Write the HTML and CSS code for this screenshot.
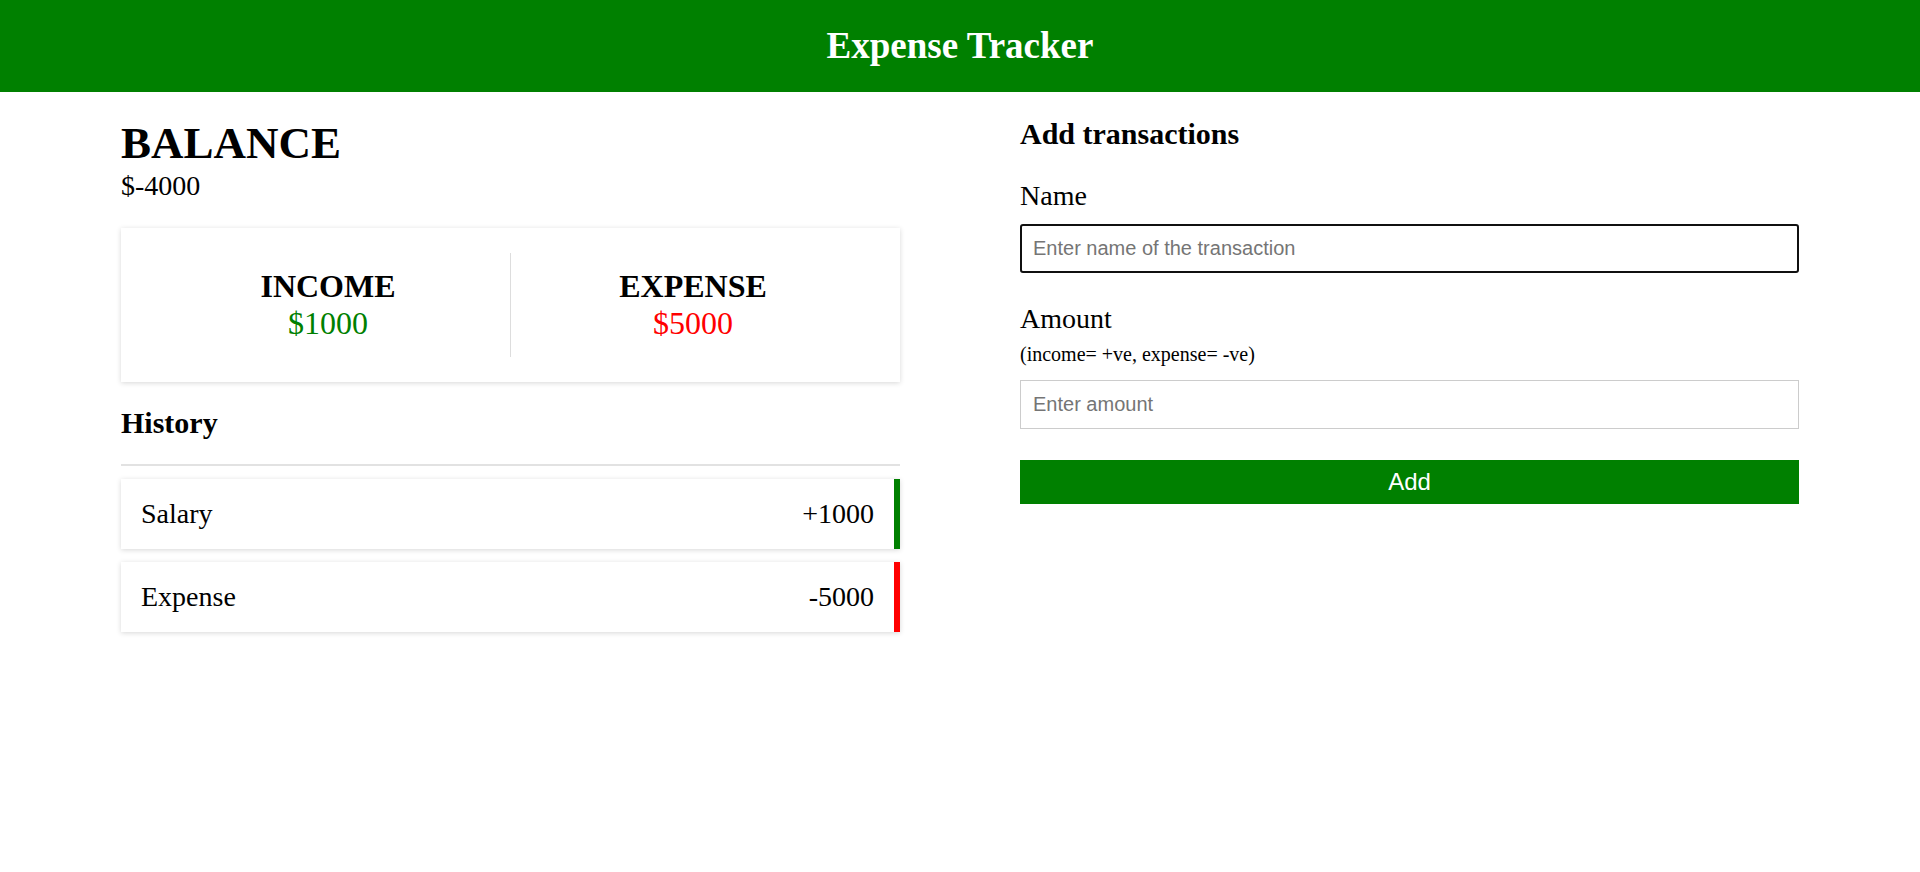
FILE: index.html
```html
<!DOCTYPE html>
<html lang="en">
<head>
<meta charset="utf-8">
<title>Expense Tracker</title>
<link rel="stylesheet" href="styles.css">
</head>
<body>
  <header class="app-header">
    <h1 class="app-title">Expense Tracker</h1>
  </header>
  <main class="main">
    <section class="col">
      <h2 class="balance-title">BALANCE</h2>
      <div class="balance-value">$-4000</div>
      <div class="summary-card">
        <div class="summary-item">
          <h3 class="summary-label">INCOME</h3>
          <div class="summary-amount income">$1000</div>
        </div>
        <div class="summary-item with-divider">
          <h3 class="summary-label">EXPENSE</h3>
          <div class="summary-amount expense">$5000</div>
        </div>
      </div>
      <h3 class="section-title history-title">History</h3>
      <ul class="history-list">
        <li class="history-item plus"><span>Salary</span><span>+1000</span></li>
        <li class="history-item minus"><span>Expense</span><span>-5000</span></li>
      </ul>
    </section>
    <section class="col">
      <h3 class="section-title">Add transactions</h3>
      <form class="tx-form">
        <label class="field-label name-label" for="name">Name</label>
        <input id="name" class="field-input focused" type="text" placeholder="Enter name of the transaction">
        <label class="field-label amount-label" for="amount">Amount</label>
        <div class="field-hint">(income= +ve, expense= -ve)</div>
        <input id="amount" class="field-input" type="text" placeholder="Enter amount">
        <button type="button" class="add-btn">Add</button>
      </form>
    </section>
  </main>
</body>
</html>
```
FILE: styles.css
```css
* { box-sizing: border-box; }
html, body { margin: 0; padding: 0; background: #fff; }
body {
  font-family: "Liberation Serif", "Times New Roman", serif;
  color: #000;
}
.app-header {
  height: 92px;
  background: #008000;
  display: flex;
  align-items: center;
  justify-content: center;
  padding-bottom: 2px;
}
.app-title {
  margin: 0;
  color: #fff;
  font-size: 37px;
  font-weight: bold;
}
.main {
  width: 1678px;
  margin: 0 auto;
  display: grid;
  grid-template-columns: 779px 779px;
  column-gap: 120px;
  padding-top: 25px;
  padding-bottom: 20px;
}
.balance-title {
  margin: 0;
  font-size: 45px;
  font-weight: bold;
}
.balance-value {
  font-size: 28px;
  margin-top: 1px;
}
.summary-card {
  margin-top: 26px;
  display: flex;
  padding: 25px;
  background: #fff;
  box-shadow: 0 1px 5px rgba(0, 0, 0, 0.16);
}
.summary-item {
  flex: 1;
  text-align: center;
  padding: 15px 0;
}
.summary-item.with-divider {
  border-left: 1px solid #ddd;
}
.summary-label {
  margin: 0;
  font-size: 32px;
  font-weight: bold;
}
.summary-amount {
  font-size: 32px;
}
.summary-amount.income { color: #008000; }
.summary-amount.expense { color: #ff0000; }
.section-title {
  margin: 0;
  font-size: 30px;
  font-weight: bold;
}
.history-title {
  margin-top: 24px;
  padding-bottom: 24px;
  border-bottom: 2px solid #e2e2e2;
}
.history-list {
  list-style: none;
  margin: 13px 0 0;
  padding: 0;
  display: flex;
  flex-direction: column;
  gap: 13px;
}
.history-item {
  display: flex;
  justify-content: space-between;
  font-size: 28px;
  padding: 19px 20px;
  background: #fff;
  box-shadow: 0 1px 5px rgba(0, 0, 0, 0.16);
}
.history-item.plus { border-right: 6px solid #008000; }
.history-item.minus { border-right: 6px solid #ff0000; }
.tx-form {
  display: flex;
  flex-direction: column;
}
.field-label {
  font-size: 28px;
}
.name-label { margin-top: 29px; }
.amount-label { margin-top: 30px; }
.field-hint {
  font-size: 20px;
  margin-top: 8px;
}
.field-input {
  margin-top: 12px;
  width: 100%;
  height: 49px;
  padding: 0 12px;
  border: 1px solid #ccc;
  font-family: "Liberation Sans", Arial, sans-serif;
  font-size: 20px;
  color: #000;
  background: #fff;
  outline: none;
}
.field-input::placeholder { color: #757575; }
.field-input.focused {
  border: 2px solid #101010;
  border-radius: 3px;
  padding: 0 11px;
}
#amount { margin-top: 14px; }
.add-btn {
  margin-top: 31px;
  height: 44px;
  width: 100%;
  border: none;
  background: #008000;
  color: #fff;
  font-family: "Liberation Sans", Arial, sans-serif;
  font-size: 24px;
}
```
